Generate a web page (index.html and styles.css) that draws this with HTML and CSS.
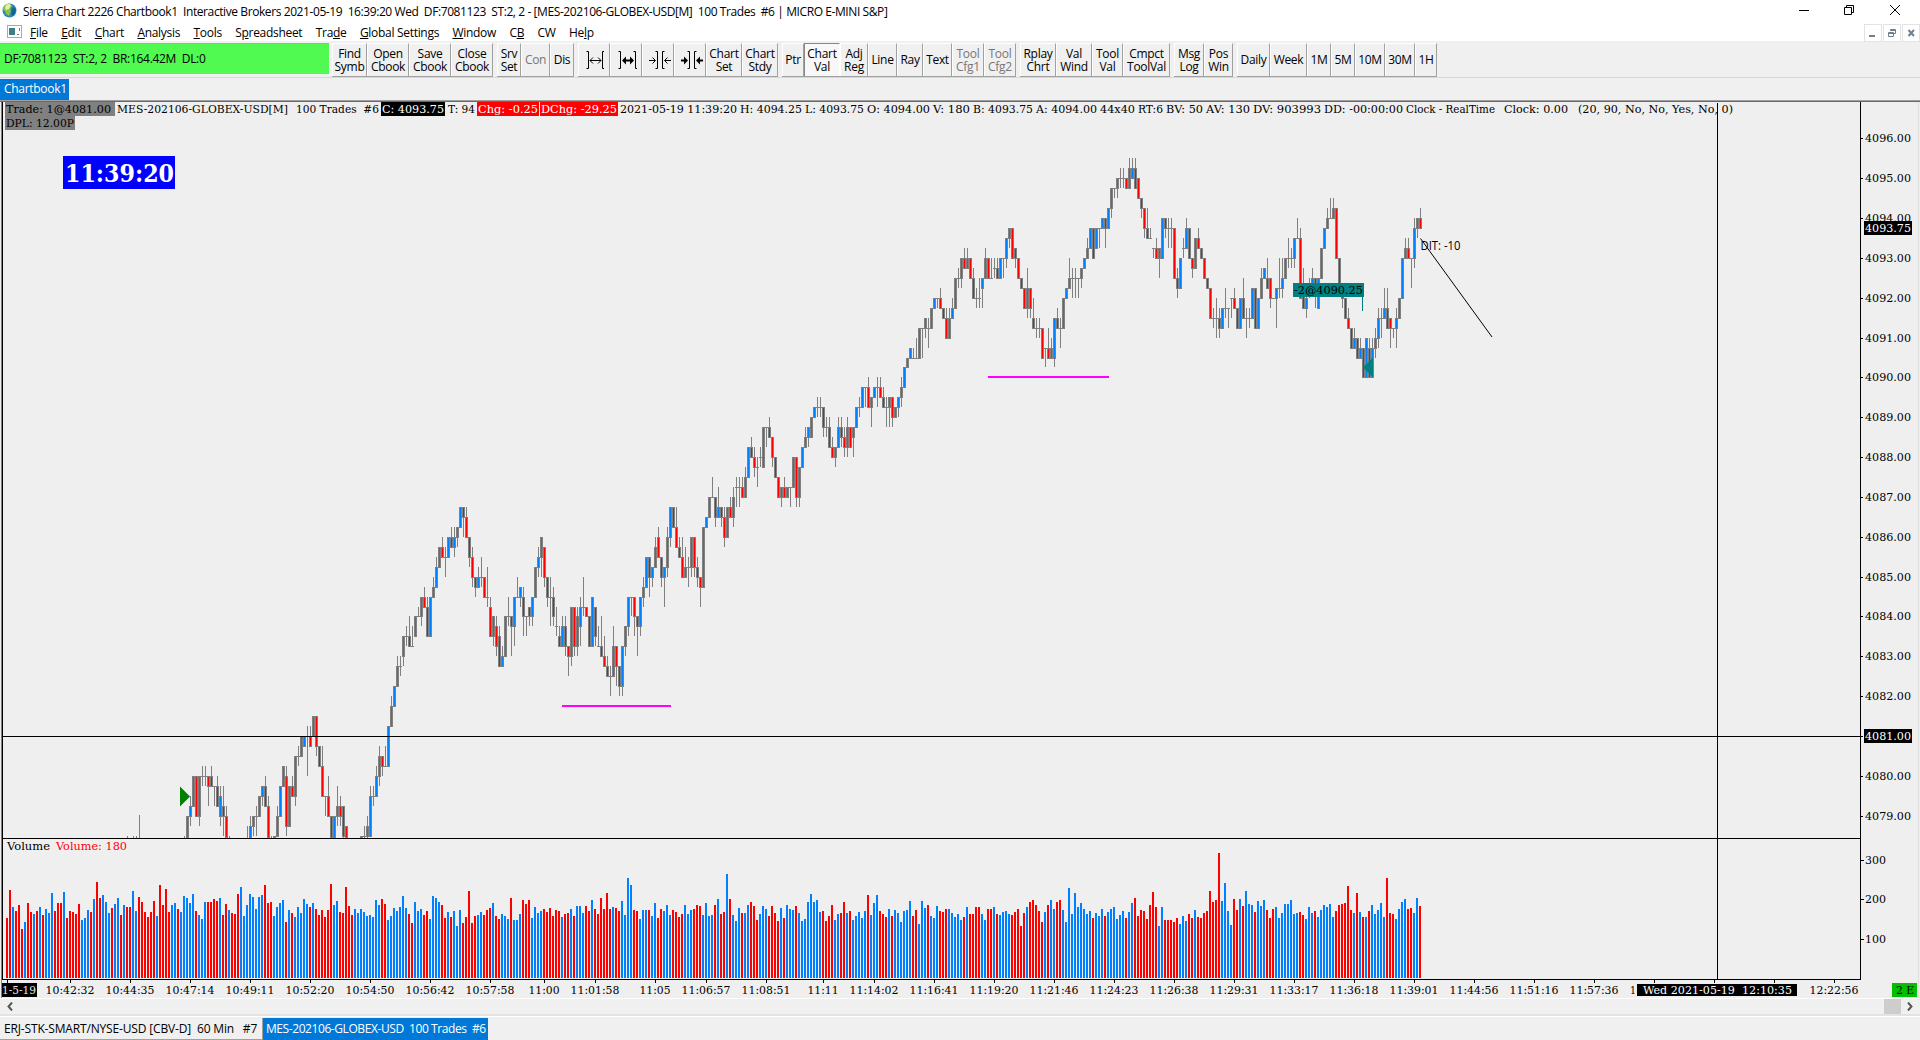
FILE: index.html
```html
<!DOCTYPE html>
<html lang="en">
<head>
    <meta charset="UTF-8">
    <title>Sierra Chart - Chartbook1</title>
    <link rel="stylesheet" href="styles.css">
</head>
<body>
    <header class="title-bar">
        <svg class="app-icon" width="15" height="15" viewBox="0 0 15 15">
            <circle cx="7.5" cy="7.5" r="7" fill="#2f86b5"/>
            <path d="M2 3 Q5 0 8 1 L10 3 L8 6 L9 8 L7 13 L4 11 L3 8 L1 7 Z" fill="#8cc63f"/>
            <path d="M4 2 Q7 0 9 2 L7 6 L4 7 L3 5 Z" fill="#dff0a8"/>
            <path d="M11 4 L14 6 L13 11 L10 13 L9 9 Z" fill="#14668f"/>
        </svg>
        <span class="title-text">Sierra Chart 2226 Chartbook1&nbsp; Interactive Brokers 2021-05-19&nbsp; 16:39:20 Wed&nbsp; DF:7081123&nbsp; ST:2, 2 - [MES-202106-GLOBEX-USD[M]&nbsp; 100 Trades&nbsp; #6 | MICRO E-MINI S&amp;P]</span>
        <svg class="window-controls" width="110" height="20" viewBox="0 0 110 20" fill="none" stroke="#000">
            <path d="M9 10.5 H19"/>
            <path d="M54.5 7.5 H61.5 V14.5 H54.5 Z M56.5 7 V5.5 H63.5 V12.5 H62"/>
            <path d="M100 5 L110 15 M110 5 L100 15"/>
        </svg>
    </header>

    <nav class="menu-bar">
        <svg class="doc-icon" width="15" height="13" viewBox="0 0 15 13">
            <rect x=".5" y=".5" width="14" height="12" fill="#fff" stroke="#aaa"/>
            <rect x="2" y="3" width="6" height="7" fill="#3d7f86"/>
            <path d="M10 9.5 H12 M12.5 3 V6" stroke="#777"/>
        </svg>
        <ul class="menu">
            <li><u>F</u>ile</li>
            <li><u>E</u>dit</li>
            <li><u>C</u>hart</li>
            <li><u>A</u>nalysis</li>
            <li><u>T</u>ools</li>
            <li>S<u>p</u>readsheet</li>
            <li>Tra<u>d</u>e</li>
            <li><u>G</u>lobal Settings</li>
            <li><u>W</u>indow</li>
            <li>C<u>B</u></li>
            <li>CW</li>
            <li>He<u>l</u>p</li>
        </ul>
        <div class="child-controls">
            <span><svg width="16" height="16" viewBox="0 0 16 16"><path d="M4 11 H10" stroke="#6f7f90" stroke-width="2"/></svg></span>
            <span><svg width="16" height="16" viewBox="0 0 16 16" fill="none" stroke="#6f7f90"><path d="M4.5 7.5 H9.5 V11.5 H4.5 Z M4 8.5 H10 M6.5 6 V4.5 H11.5 V8.5 H10 M6 5.5 H12"/></svg></span>
            <span><svg width="16" height="16" viewBox="0 0 16 16"><path d="M5.5 5 L11 11 M11 5 L5.5 11" stroke="#6f7f90" stroke-width="2"/></svg></span>
        </div>
    </nav>

    <div class="toolbar">
        <div class="status">DF:7081123&nbsp; ST:2, 2&nbsp; BR:164.42M&nbsp; DL:0</div>
        <div class="group group-file">
            <button>Find<br>Symb</button><button>Open<br>Cbook</button><button>Save<br>Cbook</button><button>Close<br>Cbook</button>
        </div>
        <div class="group group-server">
            <button>Srv<br>Set</button><button class="disabled">Con</button><button>Dis</button>
        </div>
        <div class="group group-chart">
            <button class="icon"><svg width="20" height="20" viewBox="0 0 20 20" fill="none" stroke="#000"><path d="M.5 1.5 H2.5 V18.5 H.5 M16.5 1.5 V18.5 M16.5 1.5 H18 M16.5 18.5 H18 M4 10.5 H15 M7 7.5 L4 10.5 L7 13.5 M12 7.5 L15 10.5 L12 13.5"/></svg></button>
            <button class="icon"><svg width="20" height="20" viewBox="0 0 20 20" fill="none" stroke="#000"><path d="M.5 1.5 H2.5 V18.5 H.5 M17.5 1.5 V18.5 M15.5 1.5 H17.5 M17.5 18.5 H19"/><path d="M5 10.5 H15" stroke-width="2"/><path d="M8 6.5 L4 10.5 L8 14.5 Z M12 6.5 L16 10.5 L12 14.5 Z" fill="#000" stroke="none"/></svg></button>
            <button class="icon"><svg width="22" height="20" viewBox="0 0 22 20" fill="none" stroke="#000"><path d="M6.5 1.5 H8.5 V18.5 H6.5 M15.5 1.5 H13.5 V18.5 H15.5 M0 10.5 H6 M3.5 7.5 L6.5 10.5 L3.5 13.5 M22 10.5 H16 M18.5 7.5 L15.5 10.5 L18.5 13.5"/></svg></button>
            <button class="icon"><svg width="22" height="20" viewBox="0 0 22 20" fill="none" stroke="#000"><path d="M6.5 1.5 H8.5 V18.5 H6.5 M15.5 1.5 H13.5 V18.5 H15.5"/><path d="M0 10.5 H5 M22 10.5 H17" stroke-width="2"/><path d="M3 6.5 L7 10.5 L3 14.5 Z M19 6.5 L15 10.5 L19 14.5 Z" fill="#000" stroke="none"/></svg></button>
            <button>Chart<br>Set</button><button>Chart<br>Stdy</button>
        </div>
        <div class="group group-draw">
            <button>Ptr</button><button class="pressed">Chart<br>Val</button><button>Adj<br>Reg</button><button>Line</button><button>Ray</button><button>Text</button><button class="disabled">Tool<br>Cfg1</button><button class="disabled">Tool<br>Cfg2</button>
        </div>
        <div class="group group-values">
            <button>Rplay<br>Chrt</button><button>Val<br>Wind</button><button>Tool<br>Val</button><button>Cmpct<br>ToolVal</button>
        </div>
        <div class="group group-windows">
            <button>Msg<br>Log</button><button>Pos<br>Win</button>
        </div>
        <div class="group group-period">
            <button>Daily</button><button>Week</button><button>1M</button><button>5M</button><button>10M</button><button>30M</button><button>1H</button>
        </div>
    </div>

    <div class="book-tabs"><span class="book-tab">Chartbook1</span></div>

    <main class="chart-window">
        <svg id="chart" width="1920" height="896" viewBox="0 102 1920 896"></svg>
    </main>

    <div class="scrollbar">
        <svg width="6" height="9" viewBox="0 0 6 9"><path d="M5 .5 L1.5 4.5 L5 8.5" fill="none" stroke="#555" stroke-width="2"/></svg>
        <span class="thumb"></span>
        <svg width="6" height="9" viewBox="0 0 6 9"><path d="M1 .5 L4.5 4.5 L1 8.5" fill="none" stroke="#555" stroke-width="2"/></svg>
    </div>

    <footer class="chart-tabs">
        <span class="chart-tab">ERJ-STK-SMART/NYSE-USD [CBV-D]&nbsp; 60 Min&nbsp;&nbsp; #7</span>
        <span class="chart-tab active">MES-202106-GLOBEX-USD&nbsp; 100 Trades&nbsp; #6</span>
    </footer>

    <script src="chart.js"></script>
</body>
</html>
```

FILE: styles.css
```css
* {
    margin: 0;
    padding: 0;
    box-sizing: border-box;
}

body {
    width: 1920px;
    height: 1040px;
    overflow: hidden;
    background-color: #f0f0f0;
    color: #000;
    font-family: "Open Sans", "Noto Sans", sans-serif;
    font-size: 12px;
    letter-spacing: -0.3px;
    white-space: nowrap;
}

.title-bar {
    display: flex;
    align-items: center;
    height: 24px;
    background-color: #fff;
}

.app-icon {
    margin: 0 6px 3px 2px;
}

.title-text {
    line-height: 24px;
    letter-spacing: -0.41px;
}

.window-controls {
    margin: 0 20px 4px auto;
}

.menu-bar {
    display: flex;
    height: 17px;
    background-color: #fff;
}

.doc-icon {
    margin: 1px 8px 0 7px;
}

.menu {
    display: flex;
    gap: 13.4px;
    list-style: none;
    line-height: 18px;
}

.child-controls {
    display: flex;
    gap: 1px;
    margin-left: auto;
}

.child-controls span {
    width: 18px;
    height: 18px;
    border: 1px solid #e3e3e3;
    background-color: #fff;
}

.child-controls svg {
    display: block;
}

.toolbar {
    display: flex;
    gap: 4px;
    height: 36px;
    padding-top: 2px;
}

.status {
    width: 329px;
    height: 31px;
    margin-right: -1px;
    padding-left: 4px;
    line-height: 29px;
    background-color: #50fa50;
    border-top: 1px solid #aaa;
}

.group {
    display: grid;
    height: 34px;
    border-bottom: 1px solid #a0a0a0;
}

.group-file { grid-template-columns: 35px 42px 42px 42px; }
.group-server { grid-template-columns: 24px 29px 24px; }
.group-chart { grid-template-columns: 32px 32px 32px 32px 36px 36px; }
.group-draw { grid-template-columns: 22px 36px 28px 29px 26px 29px 32px 32px; }
.group-values { grid-template-columns: 36px 36px 31px 47px; }
.group-windows { grid-template-columns: 30px 29px; }
.group-period { grid-template-columns: 33px 37px 24px 24px 30px 30px 22px; }

.group button {
    display: flex;
    align-items: center;
    justify-content: center;
    padding-bottom: 1px;
    border: 1px solid #fff;
    border-right-color: #a0a0a0;
    border-bottom: none;
    background-color: #f0f0f0;
    color: #000;
    font: inherit;
    letter-spacing: inherit;
    line-height: 13px;
    text-align: center;
}

.group .icon {
    padding-left: 3px;
}

.group .disabled {
    color: #777;
}

.group .pressed {
    background-color: #f8f8f8;
    border-color: #888 #fff #fff #888;
}

.book-tabs {
    height: 23px;
    padding-top: 1px;
    border-top: 1px solid #d8d8d8;
}

.book-tab {
    display: block;
    width: 69px;
    height: 21px;
    padding-left: 4px;
    background-color: #0078d7;
    color: #fff;
    line-height: 20px;
}

.chart-window {
    height: 898px;
    border-top: 1px solid #a0a0a0;
    background-color: #efefef;
    box-shadow: inset 0 1px #696969;
    padding-top: 1px;
}

#chart {
    display: block;
    font-family: "DejaVu Serif", serif;
    font-size: 10.8px;
    letter-spacing: 0;
}

.scrollbar {
    display: flex;
    align-items: center;
    height: 18px;
    padding: 0 7px;
    border-top: 1px solid #fff;
    border-bottom: 2px solid #e3e3e3;
}

.scrollbar .thumb {
    width: 17px;
    height: 15px;
    margin-left: auto;
    margin-right: 6px;
    background-color: #cdcdcd;
}

.chart-tabs {
    display: flex;
    height: 24px;
    padding-top: 1px;
    border-top: 1px solid #fff;
}

.chart-tab {
    width: 263px;
    height: 22px;
    padding-left: 4px;
    border-right: 1px solid #a0a0a0;
    border-bottom: 1px solid #a0a0a0;
    letter-spacing: -0.16px;
    line-height: 21px;
}

.chart-tab.active {
    width: 225px;
    padding-left: 3px;
    border: none;
    background-color: #0078d7;
    color: #fff;
    letter-spacing: -0.42px;
}
```

FILE: chart.js
```js
const svg = document.getElementById('chart');
const NS = 'http://www.w3.org/2000/svg';

const UP = '#0080ff';
const DOWN = '#ff0000';
const GREY = '#808080';

// Price bars, 3px apart: open high low close, in quarter-point ticks from 4081.00.
// A dash is a bar that lies wholly below the pane.
const bars = `-11 -10 -12 -11,-11 -8 -12 -8,-8 -6 -9 -7,-7 -4 -7 -4,-4 -4 -8 -8,-8 -4 -9 -4,-4 -3 -5 -4,-4 -3 -5 -4,-4 -4 -7 -5,-4 -3 -5 -5,
-5 -5 -7 -5,-5 -4 -7 -7,-8 -5 -9 -6,-7 -5 -10 -8,-8 -7 -12 -12,-11 -10 -12 -11,-,-,-,-,
-,-11 -9 -12 -11,-12 -8 -12 -9,-9 -8 -10 -8,-8 -7 -10 -8,-8 -6 -8 -6,-6 -5 -7 -5,-5 -4 -7 -7,-7 -6 -12 -12,-11 -10 -12 -11,
-11 -10 -12 -10,-10 -7 -10 -8,-8 -5 -8 -5,-5 -3 -5 -3,-4 -3 -10 -9,-9 -5 -9 -5,-5 -4 -6 -6,-6 -2 -7 -2,-2 -1 -3 -2,-2 0 -2 0,
-1 0 -1 0,0 1 -4 0,0 1 -1 -1,0 2 0 2,2 2 -2 -1,-1 -1 -3 -3,-3 -1 -6 -6,-6 -6 -8 -6,-6 -4 -8 -8,-8 -8 -12 -12,
-12 -8 -12 -8,-8 -5 -9 -7,-7 -6 -9 -8,-7 -7 -12 -10,-9 -9 -12 -12,-,-,-,-,-11 -10 -12 -10,
-10 -9 -12 -10,-10 -8 -12 -9,-10 -5 -10 -6,-6 -5 -7 -6,-6 -3 -6 -4,-4 -1 -5 -2,-2 -2 -4 -3,-3 -1 -3 -3,-3 1 -3 1,1 4 1 3,
3 5 3 5,5 8 5 7,7 8 6 7,8 10 7 10,10 11 9 10,10 12 9 9,9 11 9 9,10 12 10 12,12 13 12 12,12 14 11 14,
14 15 13 13,13 14 10 10,10 14 10 14,14 16 14 15,15 18 15 17,17 19 17 19,19 20 18 18,18 19 16 18,18 20 18 20,20 21 19 19,
19 21 18 20,20 21 19 21,21 23 21 23,23 23 20 22,22 23 20 20,20 20 17 18,18 19 15 16,16 16 14 15,15 17 15 16,16 18 15 16,
16 16 14 14,14 17 13 14,13 14 10 10,10 12 9 12,11 12 8 9,10 11 7 7,7 9 7 8,8 12 8 12,12 14 11 12,12 12 8 11,
11 14 9 14,14 16 14 14,14 15 13 15,14 15 10 12,12 12 10 12,13 13 11 12,12 14 11 14,14 17 14 17,17 19 16 18,18 20 16 20,
19 19 15 16,16 16 13 14,14 16 11 14,14 15 11 12,11 13 10 11,10 11 9 9,9 12 9 11,11 12 8 9,9 9 6 8,8 13 7 13,
13 13 8 9,9 13 8 12,11 14 9 13,13 16 12 13,13 13 12 12,12 12 9 9,9 14 9 14,13 13 9 10,9 11 9 9,9 12 8 8,
8 10 7 7,7 8 6 6,6 7 4 6,6 11 6 9,9 9 5 7,7 7 4 5,5 9 4 9,9 11 8 11,11 14 10 14,14 14 12 14,
14 14 10 12,12 12 8 11,11 14 10 14,14 16 13 15,15 18 15 18,18 18 14 16,16 17 15 17,17 20 17 19,20 21 18 18,18 18 15 16,
16 17 13 17,17 21 16 20,20 23 19 23,23 23 21 21,21 23 19 19,19 20 18 18,18 20 16 16,16 19 16 17,17 18 15 17,17 20 16 20,
20 20 16 17,17 18 15 16,16 16 13 15,15 21 15 21,21 22 21 22,22 24 22 24,24 26 24 24,24 24 21 22,22 25 22 23,23 23 21 22,
22 23 19 20,20 23 20 23,23 24 22 22,22 25 21 24,25 26 23 25,25 26 23 25,25 26 24 24,24 27 24 26,26 29 26 29,29 30 28 28,
28 29 26 27,27 28 25 27,28 29 27 28,27 31 27 31,31 31 29 31,31 32 30 30,30 30 27 28,28 28 26 26,26 26 24 24,24 25 23 25,
25 26 24 24,24 25 24 25,25 25 23 25,25 28 25 28,28 28 23 24,24 27 23 27,27 29 27 29,29 31 29 30,30 31 29 31,30 32 30 32,
32 33 32 33,33 34 32 33,33 34 32 33,33 33 30 31,31 32 30 31,31 32 29 29,29 30 28 28,28 29 27 29,29 32 29 31,31 32 29 30,
30 31 28 29,29 32 28 31,31 31 29 29,30 31 28 31,31 33 31 33,33 34 32 33,33 35 33 35,35 35 33 35,35 36 33 33,33 34 31 34,
34 35 34 35,35 36 33 35,35 36 34 34,34 35 33 33,33 34 31 33,33 34 31 34,34 34 31 32,32 33 32 33,33 34 32 34,34 36 33 35,
35 37 35 37,37 38 37 38,38 39 38 39,38 39 38 38,38 40 38 38,38 41 38 41,41 41 38 41,41 42 40 42,41 42 39 41,41 43 41 43,
43 44 43 44,44 44 43 44,44 45 43 43,43 43 42 42,42 43 40 40,40 43 40 42,42 44 42 43,43 46 43 46,46 47 45 46,46 48 45 48,
48 49 47 47,47 49 47 48,48 48 46 46,46 47 44 44,44 45 43 44,44 46 43 44,45 46 43 46,46 49 46 48,48 48 46 46,46 48 46 46,
47 48 46 47,47 48 46 46,46 48 46 48,48 48 46 48,48 50 47 50,50 51 49 51,51 51 48 48,49 49 47 48,48 48 46 46,46 46 45 45,
45 45 43 43,43 47 42 45,45 45 42 43,42 44 41 41,41 42 40 41,41 42 40 41,41 41 38 38,39 39 37 39,39 41 38 38,38 40 38 39,
38 42 37 42,42 43 41 41,41 42 39 41,41 44 41 44,44 45 44 45,45 48 45 46,46 47 44 46,46 47 44 46,46 46 44 46,46 47 45 47,
47 48 47 48,48 50 48 49,49 51 49 51,51 51 48 48,49 51 49 51,51 51 49 51,51 52 51 52,52 52 49 51,51 53 51 53,53 55 52 55,
55 55 54 55,55 56 54 56,56 57 55 56,56 57 55 56,56 56 55 55,55 58 55 57,56 58 56 57,57 58 55 55,56 56 54 54,54 54 52 53,
53 53 50 51,51 53 50 50,50 51 50 50,49 49 48 49,49 50 48 48,48 49 46 49,48 52 48 52,52 52 50 51,51 52 49 51,51 52 49 51,
51 51 46 46,46 47 44 45,45 48 45 48,49 50 48 49,49 52 49 51,51 51 48 48,48 48 46 47,47 50 47 50,50 51 49 49,49 49 48 48,
48 48 46 46,46 46 45 45,45 45 42 42,42 43 41 42,42 44 40 42,42 43 40 41,41 43 41 43,43 45 42 43,43 43 41 43,44 44 42 44,
44 45 43 43,43 43 41 41,41 44 41 44,44 46 42 42,42 43 40 42,42 43 41 42,42 45 42 45,45 45 41 41,41 44 41 44,44 47 44 46,
46 47 46 47,46 48 45 45,46 46 43 44,44 44 44 44,44 45 41 45,45 48 44 45,45 48 44 46,46 48 46 48,48 50 47 48,48 49 47 48,
48 50 47 50,50 52 50 50,50 51 44 44,45 47 43 43,43 45 42 44,45 46 44 45,45 47 45 46,46 46 43 45,43 46 43 46,46 49 46 49,
49 51 49 51,51 53 51 52,52 54 52 52,52 54 52 53,53 53 48 48,48 48 45 45,45 45 43 44,44 44 42 42,42 43 41 41,41 41 39 39,
39 41 39 40,40 40 38 38,38 40 38 39,39 39 36 36,36 40 36 40,39 40 36 36,36 40 36 39,39 41 38 40,40 43 39 42,42 43 40 42,
42 45 42 43,43 45 41 41,42 42 39 41,41 41 40 41,41 43 39 42,42 44 42 44,44 48 44 48,48 50 48 49,49 50 48 48,48 48 45 48,
48 52 47 51,51 52 50 52,52 53 51 51`.split(',');

// Volume bars: u = up, d = down, then the height in pixels
const volumes = `d60 d88 u71 d67 d73 d49 u56 d75 d66 u64 d67 u71 d63 u69 u65 u85 d67 d75 d75 u86 d60 d67 d66 d64 d74 u58 u60 u68 d66 u79
d96 d80 u83 u76 u65 d70 u74 u80 d63 u73 d71 d71 u87 u67 d81 d76 d66 d61 d66 d77 u62 d93 d73 d89 d66 u73 u75 d69 u66 u82
u80 u75 u84 d67 u63 u59 u76 d76 d76 d79 d77 u80 d63 d74 u68 d65 d64 d84 u91 u62 u73 u84 u81 u69 u81 u83 d93 d75 d76 u62
u71 u75 u78 d56 u68 d65 u61 u71 u65 u79 u74 d71 u75 d69 d63 d68 d61 d68 d94 u73 u77 d66 d65 d91 d72 d63 u69 u65 u69 u66
u62 u63 u61 u78 u73 d79 d74 u58 u62 u70 u67 u71 u82 u70 d64 d55 u76 u67 u69 d63 d67 u59 u82 u80 u76 d73 d60 u66 d61 u67
u52 u68 d55 d61 d87 d55 d62 u63 u66 d63 d68 d70 u75 d62 d59 u64 u62 u59 d80 u58 u58 u64 d78 d74 d78 u60 u71 u65 u67 d69
d66 d70 d62 d68 d67 u61 d64 d65 u69 d62 u72 u72 u65 d72 d67 u78 d69 d64 d80 d69 d85 d69 u71 d70 d67 u77 u63 u100 u93 d68
d67 u59 u68 u68 d68 u62 u75 d60 d69 u67 u73 u63 d68 d66 d61 d64 u73 u64 u68 d69 d73 d72 u63 u75 u62 u63 d73 u79 d64 d66
u104 d79 u63 u57 u70 d65 u65 u73 d76 d72 d58 u64 u72 u69 d62 d72 d65 d57 u70 d60 u73 u69 u68 d72 u65 u57 u59 u76 u84 u76
u78 u66 d67 d57 d62 d73 u58 u64 d65 d76 u65 d67 u58 u62 u66 u60 u67 d83 u63 u75 u83 d67 d64 d61 u69 d62 u68 u65 u56 u67
u68 u77 d62 d68 u54 u77 u70 d73 u62 u60 u72 d67 d66 d69 u69 u65 u61 u64 u58 d61 u71 d64 d64 d71 d71 u64 u58 d69 d69 u71
d64 u63 u66 u67 u64 d63 d66 d69 d52 d65 u71 d76 d78 d73 d67 d56 u66 d73 u78 u69 d76 d78 u68 u56 u90 u64 u85 u71 u75 u69
u64 u67 d60 u65 u62 u69 d62 u66 u69 u71 u59 u63 u67 d60 u66 u75 d80 d62 d68 d67 d59 d73 d86 d71 u52 u71 d58 d58 d58 d56
d60 u54 u62 u57 d64 d60 u68 d61 d60 d65 d67 d87 d76 d78 d125 u77 u95 u67 u53 d79 d68 u79 d72 u87 u74 u73 d66 u77 u72 u78
d68 d60 d69 u71 u60 u65 u74 u74 u78 u64 u65 d66 d63 u59 u71 u65 d67 u61 u68 u73 u71 u74 u61 d67 d73 d74 d75 d92 d68 u65
d85 u66 d61 u61 d67 u73 u64 u68 u75 u61 d100 d65 d64 u59 u69 u76 u79 d69 d70 u65 u80 d72`.split(/\s+/);

function add(name, attrs, text) {
    const el = document.createElementNS(NS, name);
    for (const key in attrs) {
        el.setAttribute(key, attrs[key]);
    }
    if (text) {
        el.textContent = text;
    }
    svg.appendChild(el);
    return el;
}

function rect(x, y, width, height, fill) {
    return add('rect', { x, y, width, height, fill });
}

// Text squeezed or stretched to run from x1 to x2
function label(text, x1, x2, y, fill = '#000', extra = {}) {
    const el = add('text', { x: x1, y, fill, textLength: x2 - x1, lengthAdjust: 'spacingAndGlyphs', ...extra }, text);
    el.style.whiteSpace = 'pre';
}

const priceY = n => Math.round(736 - 9.96 * n);

// Price bars
bars.forEach((bar, i) => {
    if (bar.trim() === '-') return;
    const [open, high, low, close] = bar.trim().split(' ').map(Number);
    const x = 184 + i * 3;
    const clip = y => Math.min(y, 838);
    const top = clip(priceY(Math.max(open, close)));
    const bottom = clip(priceY(Math.min(open, close)) + 1);
    const wickTop = clip(priceY(high));

    rect(x, wickTop, 1, Math.max(0, clip(priceY(low)) - wickTop), GREY);
    rect(x - 1, top, 3, Math.max(0, bottom - top), GREY);
    if (open !== close) {
        rect(x, top + 1, 1, Math.max(0, bottom - top - 2), close > open ? UP : DOWN);
    }
});
[[127, 836], [133, 836], [136, 836], [139, 815]].forEach(([x, y]) => rect(x, y, 1, 838 - y, GREY));

// Volume bars
volumes.forEach((v, i) => {
    const height = Number(v.slice(1));
    rect(6 + i * 3, 978 - height, 2, height, v[0] === 'u' ? UP : DOWN);
});

// Frame, pane borders, last trade line and crosshair
rect(1, 102, 1, 896, GREY);
rect(2, 102, 1, 878, '#000');
rect(1918, 102, 1, 896, '#e0e0e0');
rect(1860, 102, 1, 878, '#000');
rect(2, 838, 1859, 1, '#000');
rect(2, 979, 1859, 1, '#000');
rect(3, 736, 1857, 1, '#000');
rect(1717, 103, 1, 876, '#000');

// Price scale
for (let price = 4079; price <= 4096; price++) {
    const y = priceY((price - 4081) * 4);
    rect(1861, y, 2, 1, '#000');
    label(price + '.00', 1865, 1911, y + 4);
}
rect(1864, 221, 48, 14, '#000');
label('4093.75', 1865, 1911, 232, '#fff');
rect(1864, 729, 48, 14, '#000');
label('4081.00', 1865, 1911, 740, '#fff');

// Volume scale
[[300, 860], [200, 899], [100, 939]].forEach(([value, y]) => {
    rect(1861, y, 3, 1, '#000');
    label(String(value), 1865, 1886, y + 4);
});

// Time scale
const times = [
    [7, ''], [70, '10:42:32'], [130, '10:44:35'], [190, '10:47:14'], [250, '10:49:11'], [310, '10:52:20'],
    [370, '10:54:50'], [430, '10:56:42'], [490, '10:57:58'], [544, '11:00'], [595, '11:01:58'], [655, '11:05'],
    [706, '11:06:57'], [766, '11:08:51'], [823, '11:11'], [874, '11:14:02'], [934, '11:16:41'], [994, '11:19:20'],
    [1054, '11:21:46'], [1114, '11:24:23'], [1174, '11:26:38'], [1234, '11:29:31'], [1294, '11:33:17'],
    [1354, '11:36:18'], [1414, '11:39:01'], [1474, '11:44:56'], [1534, '11:51:16'], [1594, '11:57:36'],
    [1654, ''], [1714, ''], [1774, ''], [1834, '12:22:56']
];
times.forEach(([x, text]) => {
    rect(x, 980, 1, 3, '#000');
    if (text) {
        const half = text.length > 5 ? 24.5 : 15.5;
        label(text, x - half, x + half, 994);
    }
});
label('1', 1630, 1636, 994);
rect(2, 983, 35, 14, '#000');
label('1-5-19', 2, 36, 994, '#e8e8e8');
rect(1637, 984, 160, 12, '#000');
label('Wed 2021-05-19  12:10:35', 1643, 1792, 994, '#fff');
rect(1892, 983, 25, 14, '#00c000');
label('2 E', 1896, 1914, 994);

// Values line
rect(5, 102, 110, 14, GREY);
label('Trade: 1@4081.00', 6, 111, 113);
rect(5, 116, 70, 14, GREY);
label('DPL: 12.00P', 6, 74, 127);
label('MES-202106-GLOBEX-USD[M]', 117, 288, 113);
label('100 Trades  #6', 296, 379, 113);
rect(381, 102, 64, 14, '#000');
label('C: 4093.75', 382, 444, 113, '#fff');
label('T: 94', 448, 475, 113);
rect(477, 102, 62, 14, DOWN);
label('Chg: -0.25', 478, 538, 113, '#fff');
rect(540, 102, 78, 14, DOWN);
label('DChg: -29.25', 541, 617, 113, '#fff');
[
    ['2021-05-19 11:39:20', 620, 737], ['H: 4094.25', 740, 802], ['L: 4093.75', 805, 864], ['O: 4094.00', 867, 930],
    ['V: 180', 933, 970], ['B: 4093.75', 973, 1033], ['A: 4094.00', 1036, 1097], ['44x40', 1100, 1135],
    ['RT:6', 1138, 1163], ['BV: 50', 1166, 1203], ['AV: 130', 1206, 1250], ['DV: 903993', 1253, 1321],
    ['DD: -00:00:00', 1324, 1403], ['Clock - RealTime', 1406, 1495], ['Clock: 0.00', 1504, 1568],
    ['(20, 90, No, No, Yes, No, 0)', 1578, 1733]
].forEach(([text, x1, x2]) => label(text, x1, x2, 113));
label('Volume', 7, 50, 850);
label('Volume: 180', 56, 127, 850, DOWN);

// Clock
rect(63, 156, 112, 33, '#0000ff');
label('11:39:20', 65, 174, 182, '#fff', { 'font-size': 25, 'font-weight': 'bold' });

// Drawings and trade markers
rect(562, 705, 109, 2, '#ff00ff');
rect(988, 376, 121, 2, '#ff00ff');
add('path', { d: 'M180 786.5 L190 796.5 L180 806.5 Z', fill: '#008000' });
add('path', { d: 'M1373 357.5 L1363 367.5 L1373 377.5 Z', fill: '#008080' });
rect(1293, 283, 71, 14, '#008080');
rect(1362, 297, 1, 14, '#008080');
label('-2@4090.25', 1294, 1363, 294);
add('path', { d: 'M1420.5 238.5 L1492 337', stroke: '#000', fill: 'none' });
label('DIT: -10', 1420.5, 1460.5, 250, '#000', { 'font-size': 12, 'font-family': 'Open Sans, sans-serif' });
```
